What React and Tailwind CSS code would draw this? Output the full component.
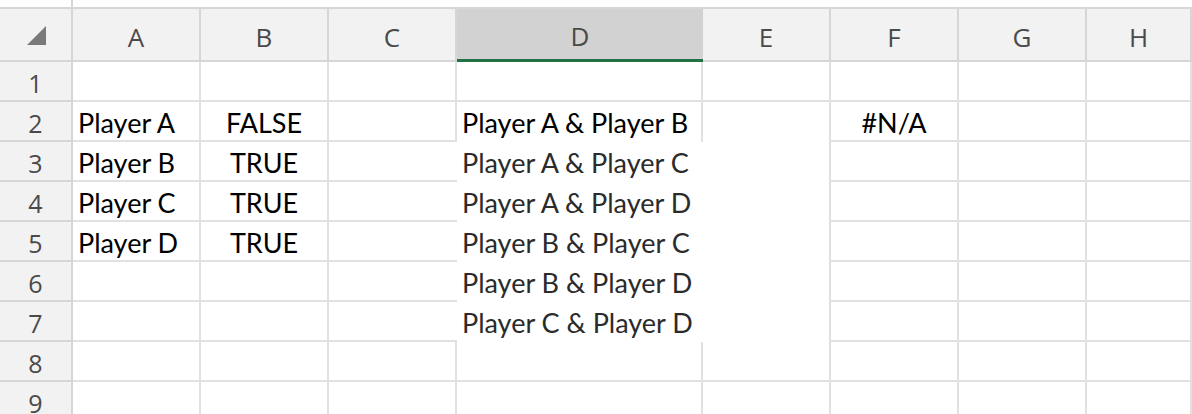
import React from 'react'

const COLS = ['A', 'B', 'C', 'D', 'E', 'F', 'G', 'H']
const GRID = 'grid grid-cols-[73px_128px_128px_128px_246px_128px_128px_128px_1fr]'

const cells = {
  '2A': 'Player A', '2B': 'FALSE', '2D': 'Player A & Player B', '2F': '#N/A',
  '3A': 'Player B', '3B': 'TRUE',
  '4A': 'Player C', '4B': 'TRUE',
  '5A': 'Player D', '5B': 'TRUE',
}

const spill = [
  'Player A & Player C',
  'Player A & Player D',
  'Player B & Player C',
  'Player B & Player D',
  'Player C & Player D',
]

const headFont = { fontFamily: '"Open Sans", "Noto Sans", sans-serif' }
const cellFont = { fontFamily: 'Lato, "Liberation Sans", sans-serif' }

const inSpill = (r, c) => r >= 3 && r <= 7 && (c === 'D' || c === 'E')

const Cell = ({ r, c }) => {
  const v = cells[`${r}${c}`]
  const noRight = c === 'C' && r >= 3 && r <= 7
  const noBottom = r === 2 && (c === 'D' || c === 'E')
  const centered = c === 'B' || c === 'F'
  return (
    <div
      className={`h-[40px] border-[#e1e1e1] ${noRight ? '' : 'border-r-2'} ${noBottom ? 'pb-[3px]' : 'border-b-2 pb-[1px]'} flex items-end overflow-hidden whitespace-nowrap text-[27px] leading-[32px] text-black ${centered ? 'justify-center' : 'pl-[5px]'}`}
      style={cellFont}
    >
      {v}
    </div>
  )
}

export default function App() {
  const rows = [1, 2, 3, 4, 5, 6, 7, 8, 9]
  return (
    <div className="w-[1192px] h-[414px] overflow-hidden bg-white select-none">
      {/* strip above the headers */}
      <div className={`${GRID} h-[7px]`}>
        <div className="border-r-2 border-[#d6d6d6]" />
      </div>

      {/* column headers */}
      <div className={`${GRID} h-[55px] border-t-2 border-[#d6d6d6] bg-[#f2f2f2]`} style={headFont}>
        <div className="relative border-r-2 border-b-2 border-[#d6d6d6]">
          <svg className="absolute left-[27px] top-[17px]" width="19" height="19" viewBox="0 0 19 19">
            <polygon points="19,0 19,19 0,19" fill="#7a7a7a" />
          </svg>
        </div>
        {COLS.map((c) =>
          c === 'D' ? (
            <div key={c} className="flex items-center justify-center pt-[5px] bg-[#d2d2d2] border-b-[3px] border-[#217346] text-[26px] text-[#4a4a4a]">
              {c}
            </div>
          ) : (
            <div key={c} className="flex items-center justify-center pt-[5px] border-r-2 border-b-2 border-[#d6d6d6] text-[26px] text-[#4a4a4a]">
              {c}
            </div>
          )
        )}
      </div>

      {/* body */}
      <div className={GRID}>
        {rows.map((r) => (
          <React.Fragment key={r}>
            <div
              className="h-[40px] bg-[#f2f2f2] border-r-2 border-b-2 border-[#d6d6d6] flex items-center justify-center pt-[5px] text-[25px] text-[#4a4a4a]"
              style={headFont}
            >
              {r}
            </div>
            {COLS.filter((c) => !inSpill(r, c)).map((c) => (
              <Cell key={c} r={r} c={c} />
            ))}
          </React.Fragment>
        ))}
        <div className="col-[5/7] row-[3/8] bg-white border-r-2 border-[#e1e1e1] flex flex-col" style={cellFont}>
          {spill.map((s) => (
            <div key={s} className="h-[40px] flex items-end pb-[3px] pl-[5px] whitespace-nowrap text-[27px] leading-[32px] text-[#2b2b2b]">
              {s}
            </div>
          ))}
        </div>
      </div>
    </div>
  )
}
